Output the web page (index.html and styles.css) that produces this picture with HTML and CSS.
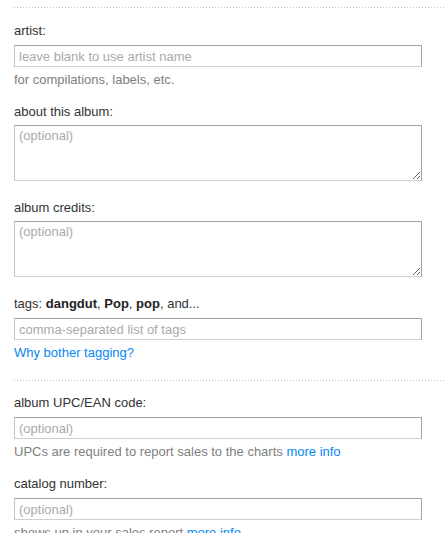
FILE: index.html
```html
<!DOCTYPE html>
<html>
<head>
<meta charset="utf-8">
<link rel="stylesheet" href="styles.css">
</head>
<body>
<div class="page">
  <div class="divider"></div>
  <div class="section first">
    <div class="field">
      <div class="label">artist:</div>
      <input class="text" type="text" placeholder="leave blank to use artist name">
      <div class="hint">for compilations, labels, etc.</div>
    </div>
    <div class="field area-field">
      <div class="label">about this album:</div>
      <textarea class="area" placeholder="(optional)"></textarea>
    </div>
    <div class="field area-field">
      <div class="label">album credits:</div>
      <textarea class="area" placeholder="(optional)"></textarea>
    </div>
    <div class="field">
      <div class="label">tags: <b>dangdut</b>, <b>Pop</b>, <b>pop</b>, and...</div>
      <input class="text" type="text" placeholder="comma-separated list of tags">
      <div class="hint"><a class="link" href="#">Why bother tagging?</a></div>
    </div>
  </div>
  <div class="divider"></div>
  <div class="section second">
    <div class="field">
      <div class="label">album UPC/EAN code:</div>
      <input class="text" type="text" placeholder="(optional)">
      <div class="hint">UPCs are required to report sales to the charts <a class="link" href="#">more info</a></div>
    </div>
    <div class="field">
      <div class="label">catalog number:</div>
      <input class="text" type="text" placeholder="(optional)">
      <div class="hint">shows up in your sales report <a class="link" href="#">more info</a></div>
    </div>
  </div>
</div>
</body>
</html>
```
FILE: styles.css
```css
html, body {
  margin: 0;
  padding: 0;
  background: #fff;
}
body {
  font-family: "Liberation Sans", Arial, sans-serif;
  font-size: 13px;
  line-height: 16px;
  color: #333;
  overflow: hidden;
}
.page {
  padding: 7px 0 0 14px;
}
.divider {
  height: 1px;
  background-image: linear-gradient(to right, #c4c4c4 1px, transparent 1px);
  background-size: 3px 1px;
  background-repeat: repeat-x;
}
.section.first {
  padding: 15px 0 3px 0;
}
.section.second {
  padding: 14px 0 3px 0;
}
.field {
  margin-bottom: 16px;
}
.field.area-field {
  margin-bottom: 19px;
}
.label {
  margin-bottom: 6px;
  color: #333;
}
.area-field .label {
  margin-bottom: 5px;
}
.label b {
  color: #222;
}
.text, .area {
  display: block;
  box-sizing: border-box;
  width: 408px;
  margin: 0;
  font-family: "Liberation Sans", Arial, sans-serif;
  font-size: 13px;
  color: #333;
  background: #fff;
  border: 1px solid;
  border-color: #a3a3a3 #a3a3a3 #cfcfcf #c4c4c4;
  border-radius: 0;
  outline: none;
}
.text {
  height: 22px;
  padding: 0 4px;
}
.area {
  height: 56px;
  padding: 2px 4px;
  line-height: 16px;
}
.text::placeholder, .area::placeholder {
  color: #aaa;
  opacity: 1;
}
.hint {
  margin-top: 5px;
  color: #808080;
}
.link {
  color: #0687f5;
  text-decoration: none;
}
```
